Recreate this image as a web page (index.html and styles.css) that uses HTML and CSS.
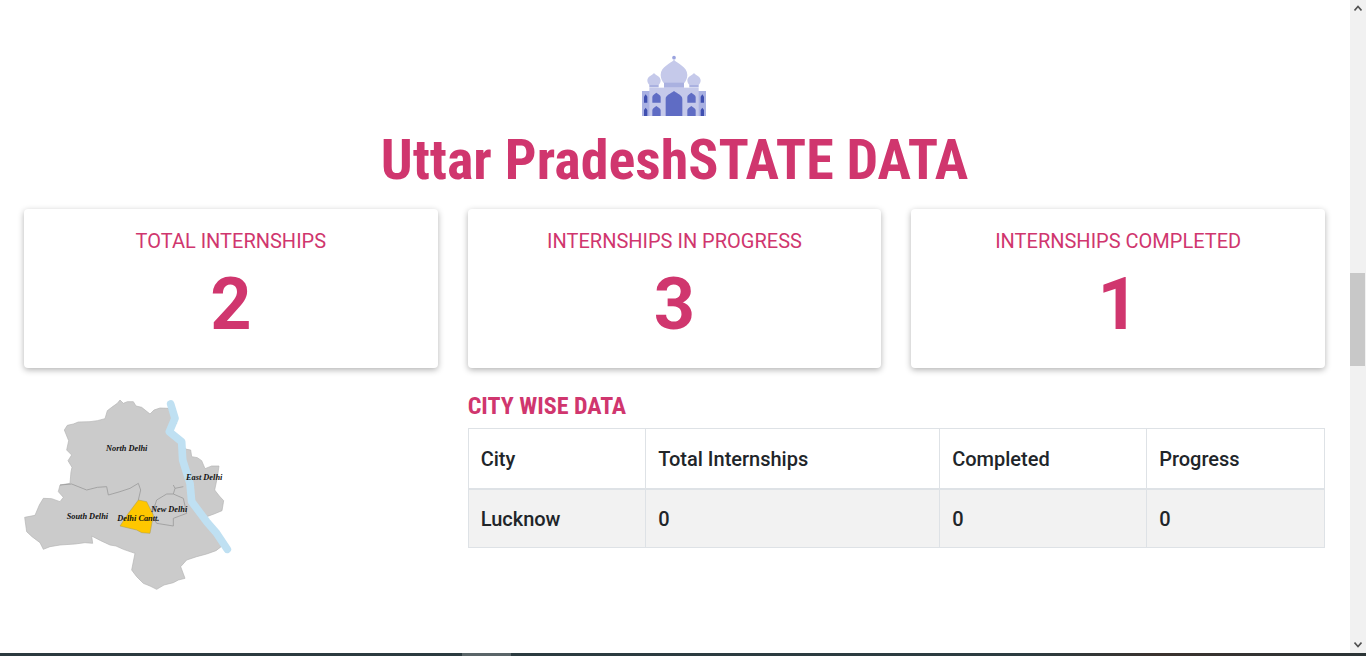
FILE: index.html
```html
<!DOCTYPE html>
<html lang="en">
<head>
    <meta charset="UTF-8">
    <meta name="viewport" content="width=device-width, initial-scale=1.0">
    <title>Uttar Pradesh State Data</title>
    <link rel="stylesheet" href="styles.css">
</head>
<body>
    <div class="page">
        <main class="content">
            <header class="state-head">
                <svg class="state-icon" viewBox="66 30 192 183" aria-hidden="true">
                    <rect x="66" y="138" width="192" height="75" fill="#a9b1e2"/>
                    <rect x="88" y="128" width="148" height="85" fill="#c5c9ea"/>
                    <circle cx="162" cy="38" r="5.5" fill="#9aa3de"/>
                    <path d="M162 44C152 56 122 64 122 90C122 102 128 110 132 115H192C196 110 202 102 202 90C202 64 172 56 162 44Z" fill="#c5c9ea"/>
                    <rect x="132" y="113" width="60" height="15" fill="#aab1e0"/>
                    <path d="M102 84C98 91 82 94 82 106C82 113 85 117 88 120H116C119 117 122 113 122 106C122 94 106 91 102 84Z" fill="#c5c9ea"/>
                    <rect x="88" y="120" width="28" height="7" fill="#aab1e0"/>
                    <path d="M222 84C218 91 202 94 202 106C202 113 205 117 208 120H236C239 117 242 113 242 106C242 94 226 91 222 84Z" fill="#c5c9ea"/>
                    <rect x="208" y="120" width="28" height="7" fill="#aab1e0"/>
                    <path d="M137 213V162C137 150 152 146 162 138C172 146 187 150 187 162V213Z" fill="#5f6cc4"/>
                    <path d="M97 173V156C97 150 104 148 109 143C114 148 122 150 122 156V173Z" fill="#5f6cc4"/>
                    <path d="M97 213V196C97 190 104 188 109 183C114 188 122 190 122 196V213Z" fill="#5f6cc4"/>
                    <path d="M202 173V156C202 150 209 148 214 143C219 148 227 150 227 156V173Z" fill="#5f6cc4"/>
                    <path d="M202 213V196C202 190 209 188 214 183C219 188 227 190 227 196V213Z" fill="#5f6cc4"/>
                    <path d="M72 173V155L77 148L82 155V173Z" fill="#3f4fb0"/>
                    <path d="M72 213V195L77 188L82 195V213Z" fill="#3f4fb0"/>
                    <path d="M242 173V155L247 148L252 155V173Z" fill="#3f4fb0"/>
                    <path d="M242 213V195L247 188L252 195V213Z" fill="#3f4fb0"/>
                </svg>
                <h1 class="state-title">Uttar PradeshSTATE DATA</h1>
            </header>

            <section class="stats">
                <div class="stat-card">
                    <p class="stat-label">TOTAL INTERNSHIPS</p>
                    <p class="stat-value">2</p>
                </div>
                <div class="stat-card">
                    <p class="stat-label">INTERNSHIPS IN PROGRESS</p>
                    <p class="stat-value">3</p>
                </div>
                <div class="stat-card">
                    <p class="stat-label">INTERNSHIPS COMPLETED</p>
                    <p class="stat-value">1</p>
                </div>
            </section>

            <section class="details">
                <svg class="city-map" viewBox="0 0 720 630" role="img" aria-label="Map of Delhi districts">
                    <path class="map-land" d="M163 120L172 106L190 102L205 96L240 95L262 92L285 86L292 62L305 52L322 40L330 30L340 40L352 35L370 35L378 48L395 52L420 72L432 60L450 54L475 55L488 78L500 100L470 125L490 145L520 170L530 178L542 180L545 200L562 203L575 212L585 236L605 228L627 228L622 262L614 300L628 318L641 332L636 362L612 372L590 380L600 400L622 430L640 465L618 482L590 492L560 500L530 510L512 530L525 565L505 570L490 578L462 585L440 598L420 588L400 580L380 560L365 540L375 490L340 478L318 468L300 465L272 452L245 438L248 460L225 458L195 462L150 465L120 470L100 478L90 458L66 440L50 425L44 382L75 376L88 345L100 325L125 326L150 335L160 322L145 305L150 285L180 280L183 245L186 232L174 212L185 195L170 180L176 152Z"/>
                    <path class="map-line" d="M150 285L185 282L230 300L262 292L290 290L295 315L330 305L360 295L385 280L392 300L385 330"/>
                    <path class="map-line" d="M490 285L495 295L520 290M495 295L490 312L520 325L530 370L490 385L490 408L440 400L425 375L440 330L470 312L490 312"/>
                    <path class="map-cantt" d="M385 330L410 335L430 375L420 430L395 428L380 420L330 408L355 370Z"/>
                    <path class="map-river" d="M482 42L495 85L478 125L515 155L518 210L540 280L545 335L590 395L620 430L652 478"/>
                    <text class="map-text" x="288" y="184">North Delhi</text>
                    <text class="map-text" x="528" y="271">East Delhi</text>
                    <text class="map-text" x="170" y="386">South Delhi</text>
                    <text class="map-text" x="423" y="366">New Delhi</text>
                    <text class="map-text" x="322" y="392">Delhi Cantt.</text>
                </svg>

                <div class="city-data">
                    <h2 class="city-title">CITY WISE DATA</h2>
                    <table class="city-table">
                        <thead>
                            <tr>
                                <th class="col-city">City</th>
                                <th class="col-total">Total Internships</th>
                                <th class="col-done">Completed</th>
                                <th>Progress</th>
                            </tr>
                        </thead>
                        <tbody>
                            <tr>
                                <td class="cell-first">Lucknow</td>
                                <td>0</td>
                                <td>0</td>
                                <td>0</td>
                            </tr>
                        </tbody>
                    </table>
                </div>
            </section>
        </main>

        <div class="scrollbar">
            <svg class="arrow arrow-up" viewBox="0 0 8 6" aria-hidden="true"><path d="M.5 5.5L4 1.5L7.5 5.5"/></svg>
            <div class="thumb"></div>
            <svg class="arrow arrow-down" viewBox="0 0 8 6" aria-hidden="true"><path d="M.5 .5L4 4.5L7.5 .5"/></svg>
        </div>
    </div>
    <div class="taskbar"><span class="taskbar-tab"></span></div>
</body>
</html>
```

FILE: styles.css
```css
* {
    box-sizing: border-box;
}
html, body {
    height: 100%;
    margin: 0;
    overflow: hidden;
}
body {
    display: flex;
    flex-direction: column;
    font-family: Roboto, "Liberation Sans", sans-serif;
    background-color: #fff;
    color: #212529;
}
.page {
    display: flex;
    flex: 1;
    min-height: 0;
}
.content {
    flex: 1;
    padding: 55px 25px 0 24px;
}
.state-head {
    text-align: center;
}
.state-icon {
    display: block;
    width: 64px;
    height: 61px;
    margin: 0 auto;
    transform: translateX(-1px);
}
.state-title {
    margin: 11px 0 0;
    font-size: 56px;
    line-height: 66px;
    font-weight: 700;
    font-stretch: condensed;
    color: #d0366e;
}
.stats {
    display: grid;
    grid-template-columns: repeat(3, 1fr);
    gap: 30px;
    margin-top: 16px;
}
.stat-card {
    height: 159px;
    padding-top: 20px;
    text-align: center;
    background: #fff;
    border-radius: 4px;
    box-shadow: 0 2px 6px rgba(0, 0, 0, .3);
    color: #d0366e;
}
.stat-label {
    margin: 0;
    font-size: 20px;
    line-height: 25px;
}
.stat-value {
    margin: 8px 0 0;
    font-size: 72px;
    line-height: 86px;
    font-weight: 700;
}
.details {
    display: grid;
    grid-template-columns: repeat(3, 1fr);
    gap: 30px;
    margin-top: 24px;
}
.city-map {
    display: block;
    width: 240px;
    height: 210px;
    margin-left: -14px;
    margin-top: -2px;
}
.map-land {
    fill: #cbcbcb;
    stroke: #b4b4b4;
    stroke-width: 2;
    stroke-linejoin: round;
}
.map-line {
    fill: none;
    stroke: #9b9b9b;
    stroke-width: 2.5;
}
.map-cantt {
    fill: #ffc700;
    stroke: #a89a50;
    stroke-width: 1.5;
}
.map-river {
    fill: none;
    stroke: #bfe0f2;
    stroke-width: 23;
    stroke-linecap: round;
    stroke-linejoin: round;
}
.map-text {
    font-family: "Liberation Serif", serif;
    font-size: 25px;
    font-weight: 700;
    font-style: italic;
    fill: #111;
}
.city-data {
    grid-column: span 2;
}
.city-title {
    margin: 0 0 8px;
    font-size: 24px;
    line-height: 28px;
    font-weight: 700;
    font-stretch: condensed;
    color: #d0366e;
}
.city-table {
    width: 100%;
    border-collapse: collapse;
    table-layout: fixed;
    font-size: 20px;
}
.city-table th, .city-table td {
    padding: 2px 12px 0 12.5px;
    text-align: left;
    font-weight: 500;
    border: 1px solid #dee2e6;
}
.city-table th {
    height: 60px;
    border-bottom-width: 2px;
}
.city-table td {
    height: 59px;
    background-color: #f2f2f2;
}
.city-table .col-city, .city-table .cell-first {
    padding-left: 12px;
}
.col-city {
    width: 177px;
}
.col-total {
    width: 294px;
}
.col-done {
    width: 207px;
}
.scrollbar {
    position: relative;
    width: 16px;
    background-color: #f1f1f1;
}
.thumb {
    position: absolute;
    top: 273px;
    left: 0;
    width: 15px;
    height: 93px;
    background-color: #c8c8c8;
}
.arrow {
    position: absolute;
    left: 4px;
    width: 8px;
    height: 6px;
    fill: none;
    stroke: #505050;
    stroke-width: 1.6;
}
.arrow-up {
    top: 5px;
}
.arrow-down {
    bottom: 5px;
}
.taskbar {
    flex: none;
    height: 3px;
    padding-left: 462px;
    background: linear-gradient(to right, #2b3a3f 0, #2c3c40 75%, #3a322e 85%, #2b3436 100%);
}
.taskbar-tab {
    display: block;
    width: 49px;
    height: 3px;
    background-color: #5a6568;
}
```
